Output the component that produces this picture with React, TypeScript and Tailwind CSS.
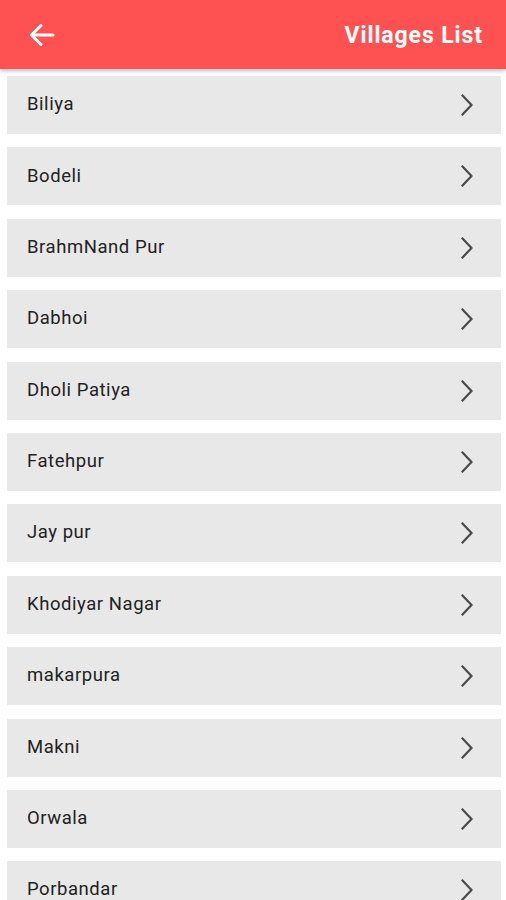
const villages = [
  "Biliya",
  "Bodeli",
  "BrahmNand Pur",
  "Dabhoi",
  "Dholi Patiya",
  "Fatehpur",
  "Jay pur",
  "Khodiyar Nagar",
  "makarpura",
  "Makni",
  "Orwala",
  "Porbandar",
];

function Chevron() {
  return (
    <svg width="12" height="22" viewBox="0 0 12 22" fill="none" className="shrink-0">
      <path d="M1.5 1.5 L10.5 11 L1.5 20.5" stroke="#4a4a4a" strokeWidth="2.2" strokeLinecap="square" />
    </svg>
  );
}

export default function App() {
  return (
    <div className="h-[900px] w-[506px] overflow-hidden bg-white font-['Roboto',sans-serif]">
      <header className="relative z-10 flex h-[69px] items-center justify-between bg-[#fe5252] pl-[29px] pr-[23px] shadow-[0_2px_4px_rgba(0,0,0,0.25)]">
        <svg width="26" height="24" viewBox="0 0 26 24" fill="none">
          <path d="M24 12 H3 M12 2.5 L2.5 12 L12 21.5" stroke="white" strokeWidth="3" strokeLinecap="round" strokeLinejoin="round" />
        </svg>
        <h1 className="mt-[4px] text-[23px] font-bold tracking-[0.9px] text-white">Villages List</h1>
      </header>
      <ul className="flex flex-col gap-[13.4px] pl-[7px] pr-[5px] pt-[7px]">
        {villages.map((v) => (
          <li
            key={v}
            className="flex h-[58px] items-center justify-between bg-[#e8e8e8] pl-[20px] pr-[28px]"
          >
            <span className="text-[18.5px] tracking-[0.55px] text-[#222]">{v}</span>
            <Chevron />
          </li>
        ))}
      </ul>
    </div>
  );
}
